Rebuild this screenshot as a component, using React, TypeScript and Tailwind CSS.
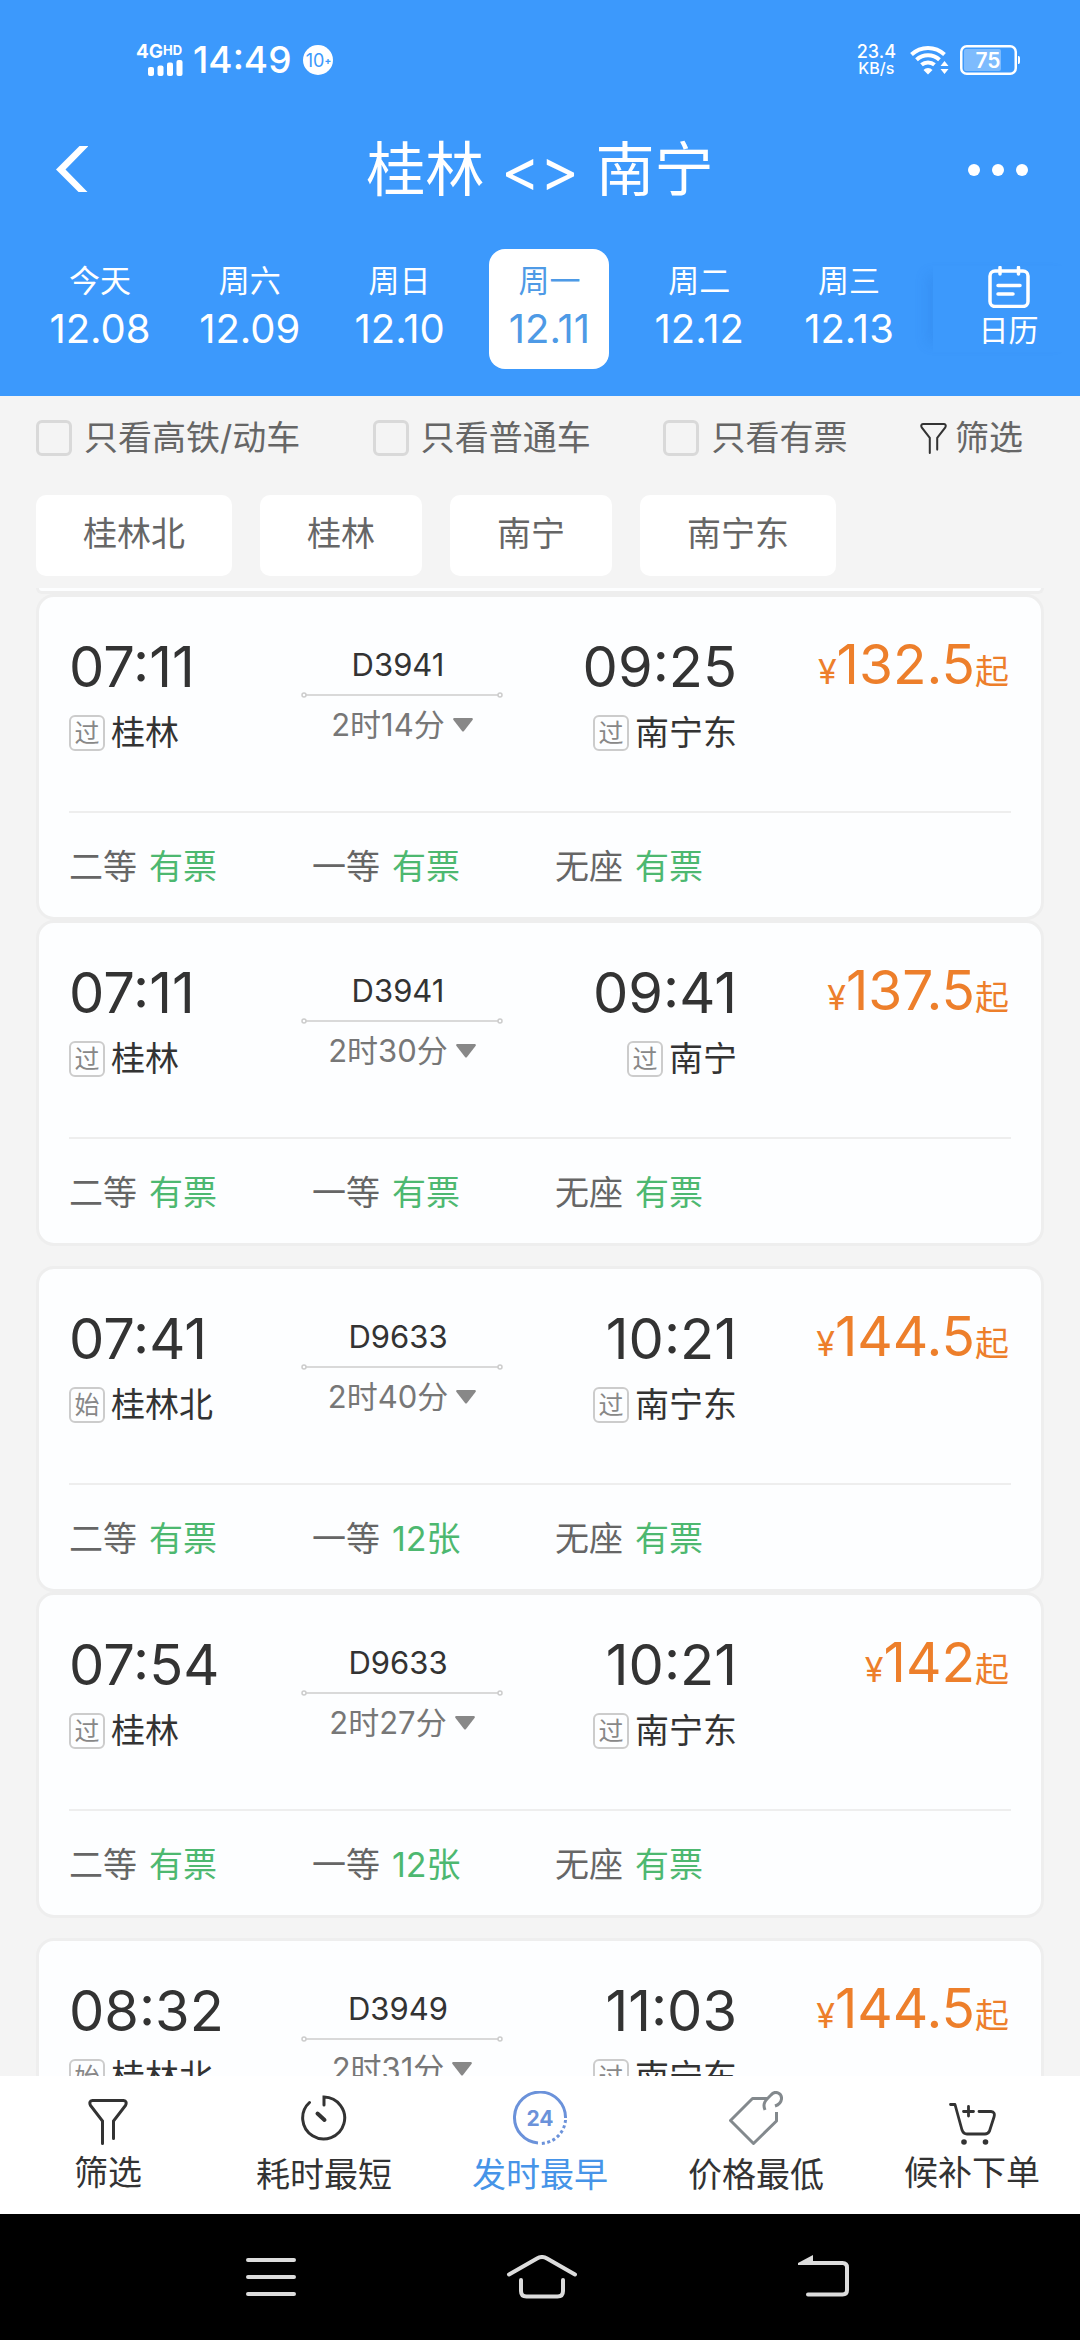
import React from "react";

type Stop = { time: string; tag: string; station: string };
type Seat = { name: string; left: string };
type Train = {
  no: string;
  from: Stop;
  to: Stop;
  duration: string;
  price: string;
  seats: Seat[];
};

const seats = (first: string): Seat[] => [
  { name: "二等", left: "有票" },
  { name: "一等", left: first },
  { name: "无座", left: "有票" },
];

const groups: Train[][] = [
  [
    {
      no: "D3941",
      from: { time: "07:11", tag: "过", station: "桂林" },
      to: { time: "09:25", tag: "过", station: "南宁东" },
      duration: "2时14分",
      price: "132.5",
      seats: seats("有票"),
    },
    {
      no: "D3941",
      from: { time: "07:11", tag: "过", station: "桂林" },
      to: { time: "09:41", tag: "过", station: "南宁" },
      duration: "2时30分",
      price: "137.5",
      seats: seats("有票"),
    },
  ],
  [
    {
      no: "D9633",
      from: { time: "07:41", tag: "始", station: "桂林北" },
      to: { time: "10:21", tag: "过", station: "南宁东" },
      duration: "2时40分",
      price: "144.5",
      seats: seats("12张"),
    },
    {
      no: "D9633",
      from: { time: "07:54", tag: "过", station: "桂林" },
      to: { time: "10:21", tag: "过", station: "南宁东" },
      duration: "2时27分",
      price: "142",
      seats: seats("12张"),
    },
  ],
  [
    {
      no: "D3949",
      from: { time: "08:32", tag: "始", station: "桂林北" },
      to: { time: "11:03", tag: "过", station: "南宁东" },
      duration: "2时31分",
      price: "144.5",
      seats: [],
    },
  ],
];

const days = [
  ["今天", "12.08"],
  ["周六", "12.09"],
  ["周日", "12.10"],
  ["周一", "12.11"],
  ["周二", "12.12"],
  ["周三", "12.13"],
];

function StatusBar() {
  return (
    <div className="flex h-30 items-center justify-between pr-[60px] pl-[136px] text-white">
      <div className="flex items-center">
        <div className="flex w-[47px] flex-col items-end">
          <div className="flex w-full items-start font-bold">
            <span className="text-[19px] leading-4">4G</span>
            <span className="text-[13px] leading-3">HD</span>
          </div>
          <svg className="h-4 w-[35px]" viewBox="0 0 35 16" fill="currentColor" aria-hidden="true">
            <rect x="0" y="7" width="6" height="9" rx="2" />
            <rect x="9.5" y="5.500" width="6" height="10.500" rx="2" />
            <rect x="19" y="2.500" width="6" height="13.500" rx="2" />
            <rect x="28.500" y="0" width="6" height="16" rx="2" />
          </svg>
        </div>
        <span className="ml-2.5 text-[37px] leading-10 font-medium">14:49</span>
        <span className="ml-3 flex h-[30px] w-[30px] items-center justify-center rounded-full bg-white text-[18px] text-[#3c99fc]">
          10<span className="text-[10px] font-bold">+</span>
        </span>
      </div>
      <div className="flex items-center">
        <div className="text-center text-[18px] leading-4 font-medium">
          <div>23.4</div>
          <div className="text-[16px]">KB/s</div>
        </div>
        <svg className="ml-3.5 h-[30px] w-[39px]" viewBox="0 0 39 30" fill="none" stroke="currentColor" strokeWidth="4" aria-hidden="true">
          <path d="M1.500 9.500 A24 24 0 0 1 34.500 9.500" />
          <path d="M6.500 14.800 A17 17 0 0 1 29.500 14.800" />
          <path d="M11.500 19.800 A10 10 0 0 1 24.500 19.800" />
          <path d="M13.500 25 A6 6 0 0 1 22.500 25 L18 29.500 Z" fill="currentColor" stroke="none" />
          <path d="M30.500 21 L34.500 16 L38.500 21 Z M30.500 24 L34.500 29 L38.500 24 Z" fill="currentColor" stroke="none" />
        </svg>
        <svg className="ml-[11px] h-[30px] w-[60px]" viewBox="0 0 60 30" aria-hidden="true">
          <rect x="1.250" y="1.250" width="54.500" height="27.500" rx="5.500" fill="none" stroke="#fff" strokeWidth="2.500" />
          <rect x="4" y="4" width="37" height="22" rx="2" fill="#7dbbfd" />
          <path d="M58 11 H58.500 Q60 11 60 13 V17 Q60 19 58.500 19 H58 Z" fill="#fff" />
          <text x="28" y="23" textAnchor="middle" fontSize="21" fontWeight="600" fill="#fff">
            75
          </text>
        </svg>
      </div>
    </div>
  );
}

function Header() {
  return (
    <header className="bg-[#3c99fc] text-white">
      <StatusBar />
      <div className="flex h-[100px] items-center justify-between px-[52px]">
        <button type="button" aria-label="返回" className="w-15">
          <svg className="h-12 w-9" viewBox="0 0 36 48" fill="currentColor">
            <path d="M27.500 0 H36.500 L13.500 23.500 L35.500 46 H26.500 L4 23.500 Z" />
          </svg>
        </button>
        <h1 className="text-[59px] leading-[80px]">桂林 &lt;&gt; 南宁</h1>
        <button type="button" aria-label="更多" className="flex w-15 justify-between">
          <span className="h-3 w-3 rounded-full bg-white" />
          <span className="h-3 w-3 rounded-full bg-white" />
          <span className="h-3 w-3 rounded-full bg-white" />
        </button>
      </div>
      <div className="flex items-center pt-[29px] pb-[27px] pl-10">
        <div className="flex flex-1 justify-between">
          {days.map(([day, date], i) => (
            <button
              key={date}
              type="button"
              className={
                i === 3
                  ? "flex h-30 w-30 flex-col items-center rounded-2xl bg-white pt-3 text-[#4e9ae6]"
                  : "flex h-30 w-30 flex-col items-center pt-3"
              }
            >
              <span className="text-[31px] leading-10">{day}</span>
              <span className="mt-1 text-[40px] leading-12">{date}</span>
            </button>
          ))}
        </div>
        <button
          type="button"
          className="ml-6 flex h-[86px] w-[147px] flex-col items-center bg-[#3c99fc] pr-6 pl-7 shadow-[-14px_0_12px_-8px_rgba(30,100,200,0.15)]"
        >
          <svg className="h-[42px] w-[42px]" viewBox="0 0 42 42" fill="none" stroke="currentColor" strokeWidth="3.500" strokeLinecap="round">
            <rect x="2" y="5" width="38" height="35.500" rx="5" />
            <path d="M12 1.500 V8 M30.500 1.500 V8 M10 19.500 H32 M10 28 H25" />
          </svg>
          <span className="mt-0.5 text-[30px] leading-10">日历</span>
        </button>
      </div>
    </header>
  );
}

function FunnelIcon({ className }: { className: string }) {
  return (
    <svg className={className} viewBox="0 0 40 46" fill="none" stroke="#333" strokeWidth="3" strokeLinecap="round" aria-hidden="true">
      <path d="M14.500 44.500 V22 L2.500 6.500 Q0.500 2 4.500 1.500 H35.500 Q39.500 2 37.500 6.500 L25.500 22 V39.500" />
    </svg>
  );
}

function Filters() {
  return (
    <section className="bg-[#f4f4f4] text-[34px] leading-[42px] text-[#666]">
      <div className="flex items-center justify-between pt-[21px] pr-[57px] pl-9">
        {["只看高铁/动车", "只看普通车", "只看有票"].map((label) => (
          <label key={label} className="flex items-center gap-3">
            <input
              type="checkbox"
              className="h-9 w-9 appearance-none rounded-md border-[3px] border-[#d9d9d9] bg-[#f4f4f4]"
            />
            {label}
          </label>
        ))}
        <button type="button" className="flex items-center gap-2">
          <FunnelIcon className="h-[31px] w-[27px]" />
          筛选
        </button>
      </div>
      <div className="flex gap-7 px-9 pt-9 pb-3">
        {["桂林北", "桂林", "南宁", "南宁东"].map((name) => (
          <button key={name} type="button" className="rounded-[10px] bg-white px-[47px] pt-[18px] pb-[21px]">
            {name}
          </button>
        ))}
      </div>
    </section>
  );
}

function Station({ tag, name }: { tag: string; name: string }) {
  return (
    <div className="mt-4 flex h-10 items-center gap-1.5 text-[34px] leading-10 text-[#333]">
      <span className="flex h-9 w-9 items-center justify-center rounded-md border-2 border-[#ccc] text-[25px] leading-8 text-[#888]">
        {tag}
      </span>
      {name}
    </div>
  );
}

function TrainCard({ train }: { train: Train }) {
  return (
    <article className="rounded-[18px] border-[3px] border-[#eee] bg-[#fdfeff] px-[30px]">
      <div className="flex border-b-2 border-[#eee] pt-10 pb-[58px]">
        <div className="w-[232px] text-[#333]">
          <div className="text-[56px] leading-[60px]">{train.from.time}</div>
          <Station tag={train.from.tag} name={train.from.station} />
        </div>
        <div className="flex w-[202px] flex-col items-center pt-2">
          <div className="pr-2 text-[31px] leading-10 text-[#333]">{train.no}</div>
          <svg className="mt-1.5 h-2 w-full" viewBox="0 0 202 8" fill="none" stroke="#ccc" strokeWidth="1.500" aria-hidden="true">
            <circle cx="3" cy="4" r="2" />
            <path d="M5 4 H197" />
            <circle cx="199" cy="4" r="2" />
          </svg>
          <button type="button" className="mt-1.5 flex items-center gap-2 text-[31px] leading-10 text-[#777]">
            {train.duration}
            <svg className="h-3.5 w-5" viewBox="0 0 20 14" aria-hidden="true">
              <path d="M1 0 H19 Q20.500 0.500 19.500 2 L11 13 Q10 14 9 13 L0.500 2 Q-0.500 0.500 1 0 Z" fill="#888" />
            </svg>
          </button>
        </div>
        <div className="flex w-[234px] flex-col items-end text-[#333]">
          <div className="text-[56px] leading-[60px]">{train.to.time}</div>
          <Station tag={train.to.tag} name={train.to.station} />
        </div>
        <div className="flex-1 pr-0.5 text-right text-[55px] leading-[54px] whitespace-nowrap text-[#ed7f2b]">
          <span className="text-[34px]">¥</span>
          {train.price}
          <span className="text-[34px]">起</span>
        </div>
      </div>
      <div className="flex pt-[34px] pb-[30px] text-[34px] leading-10 text-[#666]">
        {train.seats.map((seat) => (
          <div key={seat.name} className="flex w-[243px] gap-3">
            <span>{seat.name}</span>
            <span className="text-[#4db870]">{seat.left}</span>
          </div>
        ))}
      </div>
    </article>
  );
}

const sorts = [
  {
    label: "筛选",
    low: false,
    icon: <FunnelIcon className="h-[46px] w-10" />,
  },
  {
    label: "耗时最短",
    low: true,
    icon: (
      <svg className="h-[46px] w-[46px]" viewBox="0 0 46 46" fill="none" stroke="#333" strokeWidth="3" strokeLinecap="round" aria-hidden="true">
        <path d="M23 10 V2 A21 21 0 1 1 8.500 7.500" />
        <path d="M16.500 18.500 L23.500 25" strokeWidth="4" />
      </svg>
    ),
  },
  {
    label: "发时最早",
    low: true,
    icon: (
      <svg className="h-[54px] w-[54px]" viewBox="0 0 54 54" fill="none" stroke="#6b92da" strokeWidth="3" aria-hidden="true">
        <path d="M25 52 A25.500 25.500 0 1 1 52.500 27" />
        <path d="M52.500 29 A25.500 25.500 0 0 1 27 52.500" strokeDasharray="3 2.500" />
        <text x="27" y="34.500" textAnchor="middle" fontSize="21" fontWeight="700" fill="#6b92da" stroke="none">
          24
        </text>
      </svg>
    ),
  },
  {
    label: "价格最低",
    low: true,
    icon: (
      <svg className="h-[54px] w-[54px]" viewBox="0 0 54 54" fill="none" stroke="#83898d" strokeWidth="3" strokeLinejoin="round" aria-hidden="true">
        <path d="M38 7.500 H23.500 L1.500 29.500 L24.500 52.500 L47.500 30 V21" />
        <path d="M36 19 C33 12 37 9 42 4 C46 -1 53 2 52.500 8 C52 12 49 14 46 15" />
      </svg>
    ),
  },
  {
    label: "候补下单",
    low: false,
    icon: (
      <svg className="h-[42px] w-[47px]" viewBox="0 0 47 42" fill="none" stroke="#333" strokeWidth="2.800" strokeLinecap="round" strokeLinejoin="round" aria-hidden="true">
        <path d="M1.500 1.500 H6 L13 27 Q14.500 31 18 31 H36 Q39 31 40.500 28 L45 14 Q46.500 9 42 8.500 H30" />
        <path d="M19.500 3.500 V13 M14.500 8.500 H24.500" />
        <circle cx="15" cy="39" r="2.800" fill="#333" stroke="none" />
        <circle cx="36.500" cy="39" r="2.800" fill="#333" stroke="none" />
      </svg>
    ),
  },
];

function SortBar() {
  return (
    <nav className="grid grid-cols-5 bg-white pt-[15px] pb-[17px] text-[34px] text-[#333]">
      {sorts.map((s) => (
        <button
          key={s.label}
          type="button"
          className={
            s.label === "发时最早"
              ? "flex h-[106px] flex-col items-center text-[#4694e8]"
              : "flex h-[106px] flex-col items-center"
          }
        >
          <span className={s.low ? "flex h-[54px] items-center" : "flex h-[54px] items-end"}>{s.icon}</span>
          <span className={s.low ? "mt-2.5 leading-10" : "mt-2 leading-10"}>{s.label}</span>
        </button>
      ))}
    </nav>
  );
}

function SystemNav() {
  return (
    <div className="flex h-[126px] items-center justify-between bg-black pr-[231px] pl-[246px] text-[#dcdcdc]">
      <button type="button" aria-label="最近任务" className="w-15">
        <svg className="h-11 w-[50px]" viewBox="0 0 50 44" fill="none" stroke="currentColor" strokeWidth="4" strokeLinecap="round">
          <path d="M2 5 H48 M2 22 H48 M2 39 H48" />
        </svg>
      </button>
      <button type="button" aria-label="主屏幕">
        <svg className="h-11 w-[72px]" viewBox="0 0 72 44" fill="none" stroke="currentColor" strokeWidth="4" strokeLinecap="round">
          <path d="M3 19.500 L31 3.500 Q36 0.500 41 3.500 L69 19.500" />
          <path d="M15 25 V36 Q15 41.500 20.500 41.500 H51.500 Q57 41.500 57 36 V25" />
        </svg>
      </button>
      <button type="button" aria-label="返回上一页" className="flex w-18 justify-end">
        <svg className="h-11 w-[51px]" viewBox="0 0 51 44" fill="none" stroke="currentColor" strokeWidth="4" strokeLinecap="round">
          <path d="M14 8 H44.500 Q49 8 49 12.500 V35 Q49 39.500 44.500 39.500 H10" />
          <path d="M0 8 L15 0 V10 H0 Z" fill="currentColor" stroke="none" />
        </svg>
      </button>
    </div>
  );
}

export default function App() {
  return (
    <div className="flex h-screen flex-col bg-[#f4f4f4] font-['Inter','Noto_Sans_CJK_SC',sans-serif]">
      <Header />
      <Filters />
      <main className="flex min-h-0 flex-1 flex-col gap-5 overflow-hidden px-9">
        <div>
          <div className="h-1.5 rounded-b-[18px] border-x-[3px] border-b-[3px] border-[#eee] bg-[#fdfeff]" />
          {groups[0].map((t) => (
            <TrainCard key={t.from.time + t.to.time} train={t} />
          ))}
        </div>
        {groups.slice(1).map((group) => (
          <div key={group[0].from.time}>
            {group.map((t) => (
              <TrainCard key={t.from.time + t.to.time} train={t} />
            ))}
          </div>
        ))}
      </main>
      <SortBar />
      <SystemNav />
    </div>
  );
}
